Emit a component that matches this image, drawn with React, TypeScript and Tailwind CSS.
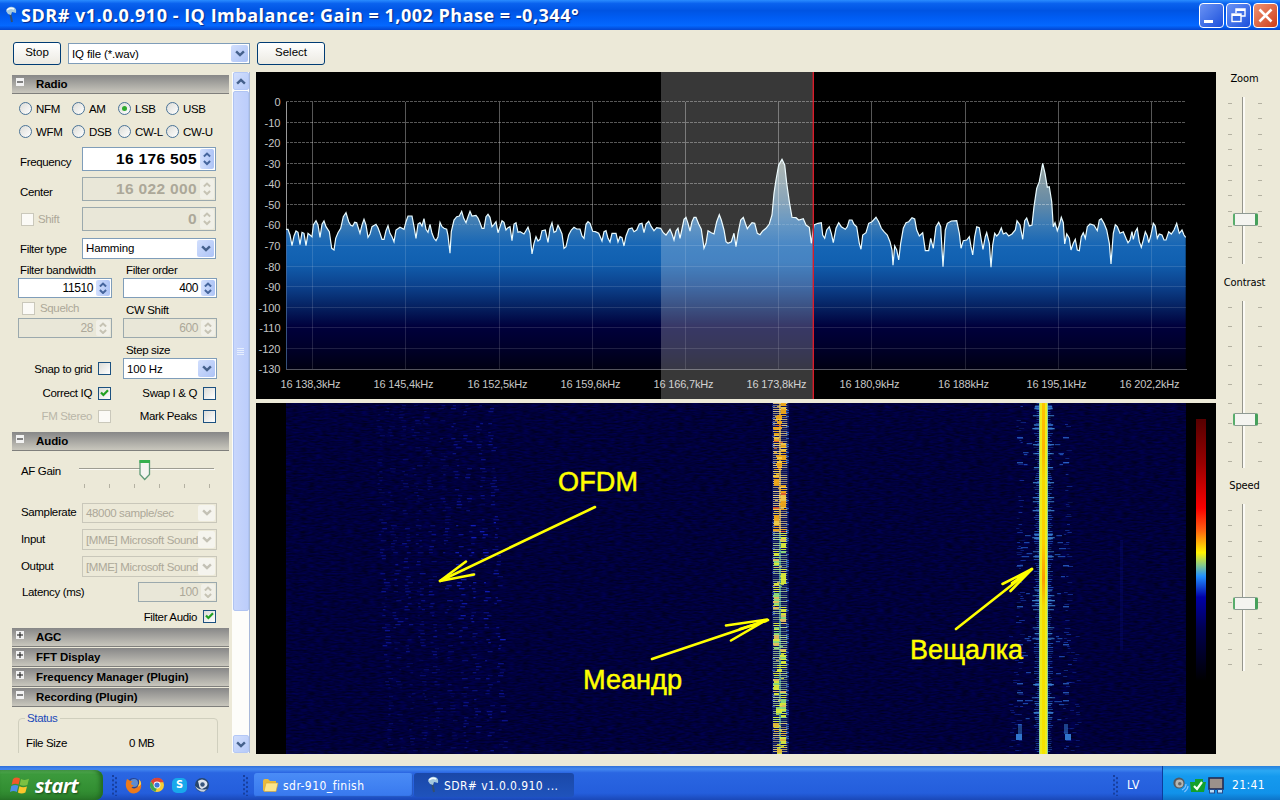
import React from "react";

/* ---------- helpers ---------- */

function makeRandom(seed: number) {
  let s = seed;
  return () => {
    s = (s * 1664525 + 1013904223) % 4294967296;
    return s / 4294967296;
  };
}

type BarProps = { x: number; y: number; w: number; h: number; fill: string; o: number };

const Bars = ({ items }: { items: BarProps[] }) => (
  <>
    {items.map((b, i) => (
      <rect key={i} x={b.x} y={b.y} width={b.w} height={b.h} fill={b.fill} opacity={b.o} />
    ))}
  </>
);

/* ---------- small XP controls ---------- */

const Chevron = ({ up, color, size = 9 }: { up?: boolean; color: string; size?: number }) => (
  <svg width={size} height={size * 0.7} viewBox="0 0 9 6" className="block">
    <path d={up ? "M1 5 L4.5 1.6 L8 5" : "M1 1 L4.5 4.4 L8 1"} fill="none" stroke={color} strokeWidth="2.2" />
  </svg>
);

const Spinner = ({ value, disabled, big, className }: { value: string; disabled?: boolean; big?: boolean; className: string }) => (
  <div className={`flex items-stretch border p-px ${disabled ? "border-[#9ba9ad] bg-[#e9e7d8]" : "border-[#7f9db9] bg-white"} ${className}`}>
    <div
      className={`flex flex-1 items-center justify-end pr-[3px] leading-none ${big ? "text-[15.5px] font-bold tracking-[0.35px]" : "pb-px text-[12px] tracking-[-0.4px]"} ${disabled ? "text-[#aca899]" : "text-black"}`}
    >
      {value}
    </div>
    <div
      className={`flex w-[14px] flex-col items-center justify-evenly rounded-[2px] ${disabled ? "bg-[#f1f0e8]" : "bg-linear-to-r from-[#d2dffd] to-[#aec4f6]"}`}
    >
      <Chevron up color={disabled ? "#c6c3b4" : "#45659d"} size={8} />
      <Chevron color={disabled ? "#c6c3b4" : "#45659d"} size={8} />
    </div>
  </div>
);

const Combo = ({ value, disabled, className }: { value: string; disabled?: boolean; className: string }) => (
  <div className={`flex items-stretch overflow-hidden border p-px ${disabled ? "border-[#c9c7ba] bg-[#ece9d8]" : "border-[#7f9db9] bg-white"} ${className}`}>
    <div className={`min-w-0 flex-1 self-center pl-[2px] text-[11.5px] leading-[16px] whitespace-nowrap ${disabled ? "tracking-[-0.35px] text-[#aca899]" : "tracking-[-0.15px] text-black"}`}>
      {value}
    </div>
    <div className={`flex w-[17px] items-center justify-center rounded-[2px] ${disabled ? "bg-[#f5f4ee]" : "bg-linear-to-br from-[#d2dffd] to-[#adc3f6]"}`}>
      <Chevron color={disabled ? "#c3c1b5" : "#45618c"} size={10} />
    </div>
  </div>
);

const Check = ({ on, disabled }: { on?: boolean; disabled?: boolean }) => (
  <div className={`flex h-[13px] w-[13px] shrink-0 items-center justify-center border ${disabled ? "border-[#cac8bb] bg-[#fbfaf6]" : "border-[#1c5180] bg-linear-to-br from-[#dcdcd7] to-white"}`}>
    {on && (
      <svg width="9" height="9" viewBox="0 0 9 9">
        <path d="M1 3.4 L3.4 6 L8 1.2" fill="none" stroke="#21a121" strokeWidth="2.2" />
      </svg>
    )}
  </div>
);

const Radio = ({ label, on, className }: { label: string; on?: boolean; className: string }) => (
  <div className={`flex items-center gap-[4px] ${className}`}>
    <div className="flex h-[13px] w-[13px] shrink-0 items-center justify-center rounded-full border border-[#4a7397] bg-linear-to-br from-[#dcdcd7] to-white">
      {on && <div className="h-[5px] w-[5px] rounded-full bg-[#2faa2f]" />}
    </div>
    <span className="whitespace-nowrap tracking-[-0.35px]">{label}</span>
  </div>
);

const Header = ({ label, open, className = "" }: { label: string; open?: boolean; className?: string }) => (
  <div className={`flex h-[20px] shrink-0 flex-col ${className}`}>
    <div className="flex h-[19px] items-start border-b border-[#7f7f7c] bg-linear-to-b from-[#878787] to-[#c9c7bd]">
      <div className="mt-[3px] ml-[4px] flex h-[8px] w-[8px] items-center justify-center bg-[#f2f2f2]">
        <svg width="6" height="6" viewBox="0 0 6 6">
          <path d={open ? "M0 3 H6" : "M0 3 H6 M3 0 V6"} stroke="#111" strokeWidth="1" />
        </svg>
      </div>
      <span className="ml-[12px] text-[11.5px] leading-[18px] font-bold tracking-[-0.08px] whitespace-nowrap text-black">{label}</span>
    </div>
  </div>
);

const Tray = ({ label, ticks, thumb, className }: { label: string; ticks: number; thumb: string; className: string }) => (
  <div className={`flex flex-col items-center ${className}`}>
    <div className="h-[16px] pr-px font-['DejaVu_Sans_Condensed','Liberation_Sans',sans-serif] text-[11px] leading-[16px] tracking-[-0.1px]">{label}</div>
    <div className="relative mt-[10px] flex h-[167px] w-[34px] justify-between">
      <div className="flex flex-col justify-between py-[6px]">
        {Array.from({ length: ticks }, (_, i) => (
          <div key={i} className="h-px w-[4px] bg-[#b4b1a2]" />
        ))}
      </div>
      <div className="ml-[-4px] h-full w-[3px] border-l border-[#95958c] bg-[#fbfaf5]" />
      <div className="flex flex-col justify-between py-[6px]">
        {Array.from({ length: ticks }, (_, i) => (
          <div key={i} className="h-px w-[4px] bg-[#b4b1a2]" />
        ))}
      </div>
      <div className={`absolute left-[5px] h-[13px] w-[25px] rounded-[2px] border-y border-r-[3px] border-l-2 border-y-[#8f9a94] border-r-[#46a05c] border-l-[#58ad6c] bg-[#f4f4f0] ${thumb}`} />
    </div>
  </div>
);

/* ---------- spectrum ---------- */

const traceA =
  "108,478 114,478 120,495 126,527 132,498 138,483 144,487 150,524 156,487 162,490 168,527 174,490 180,495 186,500 190,465 198,452 204,465 210,502 216,463 222,453 228,470 238,485 245,535 252,540 257,505 264,488 272,475 280,440 288,428 296,455 302,466 308,468 314,457 320,458 330,490 336,465 342,448 348,465 354,502 360,492 366,470 378,463 384,473 390,490 396,508 402,508 408,482 414,467 420,490 426,500 432,515 438,480 450,472 462,478 468,455 474,438 486,438 492,470 498,505 504,462 510,458 516,468 522,446 528,478 534,487 540,463 546,490 552,505 558,512 564,500 570,457 576,470 582,475 590,478 594,497 600,550 604,485 612,450 620,440 628,438 635,424 641,445 648,458 654,440 660,424 666,438 678,436 684,444 690,458 696,475 702,475 708,440 714,433 720,442 726,470 732,463 738,455 744,488 750,470 756,452 762,457 768,480 774,473 780,470 786,512 792,462 798,458 804,487 810,485 822,492 834,472 840,490 846,552 852,520 858,500 864,513 870,508 876,482 886,480 894,517 900,475 906,458 912,487 918,484 924,466 930,478 936,492 942,535 948,530 956,495 964,480 972,472 980,477 990,477 996,498 1002,505 1008,463 1014,455 1020,460 1028,484 1036,485 1046,490 1056,513 1062,485 1068,482 1074,505 1080,516 1086,490 1092,490 1098,490 1104,516 1110,500 1116,503 1122,528 1128,498 1136,477 1146,474 1152,485 1160,480 1168,462 1176,460 1182,488 1188,462 1196,454";
const traceB =
  "4,290 12,302 20,293 32,295 40,308 48,315 60,298 66,312 72,330 78,303 84,295 90,325 96,297 102,268 108,262 114,280 120,303 126,275 132,262 138,262 146,282 154,298 162,355 168,340 174,302 184,308 192,312 200,275 208,254 214,270 222,300 228,335 234,340 244,335 252,310 258,350 264,310 272,270 280,262 286,280 292,296 300,285 306,278 314,280 322,310 330,314 338,303 348,295 358,282 366,255 372,190 378,150 386,105 396,88 404,105 410,160 418,215 426,262 438,263 446,270 460,266 468,285 478,292 484,340 492,285 504,280 514,278 518,315 524,325 530,300 538,290 544,310 550,338 558,295 566,278 574,290 586,298 592,290 598,270 606,270 612,283 620,290 628,340 633,358 638,315 648,308 656,280 666,275 678,262 686,275 694,295 702,305 712,315 720,335 726,360 729,406 734,348 740,360 746,390 752,340 760,295 768,278 776,275 786,263 794,267 800,300 808,318 818,308 826,362 836,362 842,325 850,355 858,290 866,277 872,290 879,410 886,300 892,280 904,273 920,272 928,310 933,355 940,332 950,330 958,320 963,350 968,375 974,320 980,290 988,293 994,330 999,358 1006,320 1010,308 1018,340 1023,412 1028,345 1034,310 1040,318 1046,312 1054,294 1060,312 1068,308 1076,318 1086,312 1096,300 1101,272 1110,285 1118,328 1124,272 1130,264 1138,288 1146,285 1152,230 1160,175 1168,155";
const traceC =
  "128,100 135,130 142,172 148,170 155,215 160,290 165,278 172,302 178,285 184,262 190,278 194,342 200,312 208,325 213,360 220,340 226,328 232,360 238,362 244,320 250,308 256,325 262,290 270,282 282,286 292,302 298,270 304,266 312,280 320,300 328,340 333,402 340,310 346,284 352,290 360,310 370,305 378,325 384,338 390,330 396,305 400,328 406,305 412,295 418,335 424,352 430,330 436,305 442,318 446,338 452,318 460,280 466,288 472,325 478,312 486,315 492,330 498,330 506,305 514,312 522,300 530,280 538,310 546,300 552,315 557,322";

const place = (src: string, ox: number, oy: number) =>
  src.split(" ").map((p) => {
    const [x, y] = p.split(",").map(Number);
    return `${(ox + x / 3).toFixed(1)},${(oy + y / 3).toFixed(1)}`;
  });

const tracePoints = [...place(traceA, 250, 70), ...place(traceB, 650, 130), ...place(traceC, 1000, 130)].join(" ");

const freqs: [number, string, number][] = [
  [312, "16 138,3kHz", 60],
  [405, "16 145,4kHz", 60],
  [499, "16 152,5kHz", 60],
  [592, "16 159,6kHz", 60],
  [685, "16 166,7kHz", 60],
  [778, "16 173,8kHz", 60],
  [871, "16 180,9kHz", 60],
  [965, "16 188kHz", 51],
  [1058, "16 195,1kHz", 60],
  [1151, "16 202,2kHz", 60],
];

const Spectrum = () => (
  <svg width="960" height="327" viewBox="256 72 960 327" className="block bg-black" fontFamily="'Liberation Sans', Arial, sans-serif">
    <defs>
      <linearGradient id="spec" gradientUnits="userSpaceOnUse" x1="0" y1="102" x2="0" y2="369">
        <stop offset="0" stopColor="#e8dcc0" />
        <stop offset="0.22" stopColor="#9aa49d" />
        <stop offset="0.37" stopColor="#688ca6" />
        <stop offset="0.46" stopColor="#3a7ab4" />
        <stop offset="0.54" stopColor="#1565b5" />
        <stop offset="0.6" stopColor="#1160b0" />
        <stop offset="0.69" stopColor="#0c418c" />
        <stop offset="0.77" stopColor="#05205f" />
        <stop offset="0.84" stopColor="#00003c" />
        <stop offset="0.92" stopColor="#00002a" />
        <stop offset="1" stopColor="#000012" />
      </linearGradient>
    </defs>
    <polygon points={`286.5,369 ${tracePoints} 1185.7,369`} fill="url(#spec)" />
    {Array.from({ length: 14 }, (_, i) => {
      const y = Math.round(102 + i * 20.57) - 0.5;
      return (
        <g key={i}>
          {i < 13 && (
            <path d={`M286 ${y} H1186`} stroke="#fff" strokeOpacity={i > 7 ? 0.12 : i > 5 ? 0.14 : 0.34} strokeDasharray={i > 6 ? undefined : "3 1"} />
          )}
          <text x="280.5" y={y + 4.7} fontSize="11" fill="#c6c6c6" textAnchor="end">
            {i === 0 ? "0" : `-${i * 10}`}
          </text>
        </g>
      );
    })}
    {freqs.map(([x, t, w]) => (
      <g key={x}>
        <path d={`M${x + 0.5} 102 V225`} stroke="#fff" strokeOpacity="0.34" />
        <path d={`M${x + 0.5} 225 V369`} stroke="#fff" strokeOpacity="0.13" />
        <text x={x - 1.5} y="388" fontSize="11" fill="#c6c6c6" textAnchor="middle" textLength={w}>
          {t}
        </text>
      </g>
    ))}
    <path d="M286.5 102 V230" stroke="#999" />
    <path d="M286.5 230 V369" stroke="#4d72a8" strokeOpacity="0.7" />
    <path d="M286 369.5 H1187" stroke="#54545e" />
    <polyline points={tracePoints} fill="none" stroke="#e9fbff" strokeWidth="1.2" />
    <rect x="661" y="72" width="152" height="327" fill="#fff" opacity="0.22" />
    <rect x="812.6" y="72" width="1.4" height="327" fill="#d81c2a" />
  </svg>
);

/* ---------- waterfall ---------- */

function ofdmBars(): BarProps[] {
  const r = makeRandom(11);
  const out: BarProps[] = [];
  const cols = [377, 388, 400, 413, 425, 440, 453, 465, 478, 490];
  cols.forEach((c, ci) => {
    for (let y = 405; y < 752; y += 3) {
      if (r() < 0.55) {
        const strength = (ci > 5 ? 0.5 : 0.32) * (y > 520 && y < 660 ? 1.3 : 0.8);
        out.push({ x: c + (y - 403) * 0.035 + r() * 5 - 3, y, w: 2 + r() * 4, h: 1.3, fill: "#1220c0", o: strength * (0.5 + r()) });
      }
    }
  });
  return out;
}

function meanderBars(): BarProps[] {
  const r = makeRandom(5);
  const out: BarProps[] = [];
  const blocks = [
    [0, 13, 1], [13, 25, 2], [25, 41, 0], [40, 61, 1], [50, 67, 2], [66, 83, 0], [82, 108, 1], [105, 127, 0], [126, 149, 1],
    [148, 167, 0], [166, 182, 1], [181, 206, 0], [205, 221, 1], [221, 246, 0], [246, 265, 1], [263, 271, 2], [271, 291, 0], [288, 315, 1], [303, 312, 2], [314, 329, 0], [328, 345, 1], [343, 351, 2],
  ];
  const palette = (y: number) => {
    const k = r();
    if (y < 130) return k < 0.6 ? "#f0a818" : k < 0.9 ? "#f2cc4a" : "#e0602c";
    if (y < 320) return k < 0.6 ? "#dcec38" : k < 0.85 ? "#8ee07a" : "#e4c060";
    return k < 0.5 ? "#e4bc38" : "#d8ea40";
  };
  out.push({ x: 772, y: 403, w: 17, h: 351, fill: "#0a1a78", o: 0.55 });
  out.push({ x: 779, y: 403, w: 2, h: 130, fill: "#e6bc4c", o: 0.75 });
  out.push({ x: 779, y: 533, w: 2, h: 221, fill: "#48a6a0", o: 0.8 });
  for (let y = 0; y < 350; y += 2) {
    const pale = y < 130 ? "#ecd080" : y < 320 ? "#b4d890" : "#dccc78";
    out.push({ x: 773, y: 403 + y, w: 7, h: 1, fill: pale, o: r() < 0.2 ? 0.25 : 0.5 + r() * 0.5 });
    out.push({ x: 780, y: 403 + y, w: 7.3, h: 1, fill: pale, o: r() < 0.2 ? 0.25 : 0.5 + r() * 0.5 });
    if (r() < 0.3) out.push({ x: 774 + Math.floor(r() * 8), y: 404 + y, w: 3, h: 1, fill: palette(y), o: 0.8 });
    if (r() < 0.25) out.push({ x: 772, y: 404 + y, w: 3, h: 1, fill: "#3158c8", o: 0.7 });
    if (r() < 0.3) out.push({ x: 786, y: 404 + y, w: 3, h: 1, fill: "#3c7ae0", o: 0.7 });
  }
  blocks.forEach(([a, b, side]) => {
    for (let y = a - (a % 2); y < b; y += 2) {
      const core = Math.abs(y - (a + b) / 2) < (b - a) / 4.5;
      const full = core ? r() < 0.85 : r() < 0.25;
      const x = side === 0 ? 774 : side === 1 ? 781 : 777;
      const nudge = r() < 0.3 ? 1 : 0;
      out.push({ x: x - nudge, y: 403 + y, w: 5 + nudge, h: full ? 2 : 1, fill: palette(y), o: 0.95 });
    }
  });
  return out;
}

function carrierBars(): BarProps[] {
  const r = makeRandom(23);
  const out: BarProps[] = [];
  for (let y = 403; y < 753; y += 2) {
    const l = 1.5 + r() * 4;
    out.push({ x: 1039 - l, y, w: 9 + 2 * l, h: 1, fill: "#2b6ee0", o: 0.25 + r() * 0.45 });
  }
  const strong = [406, 408, 415, 424, 428, 444, 453, 467, 482, 497, 501, 510, 534, 537, 538, 551, 556, 590, 595, 600, 603, 605, 609, 627, 633, 638, 684, 697, 703, 712, 717];
  strong.forEach((y) => {
    const l = 4 + r() * 3.5;
    const o = 0.45 + r() * 0.35;
    out.push({ x: 1039 - l, y, w: l, h: 1.3, fill: "#4aa4f4", o });
    out.push({ x: 1048, y, w: l, h: 1.3, fill: "#4aa4f4", o });
  });
  const wide = [443, 452, 454, 464, 535, 542, 547, 553, 556, 576, 593, 636, 638, 640, 655, 672, 700, 703, 718];
  wide.forEach((y) => {
    const d = 10 + r() * 7;
    const w = 3 + r() * 5;
    out.push({ x: 1043 - d - w, y, w, h: 1.2, fill: "#2868e0", o: 0.65 });
    out.push({ x: 1044 + d, y: y + (r() < 0.5 ? 0 : 1), w, h: 1.2, fill: "#2868e0", o: 0.65 });
  });
  for (let y = 404; y < 752; y += 2) {
    const dense = y > 500 ? 0.4 : 0.2;
    if (r() < dense) out.push({ x: 1016 + r() * 5, y, w: 2 + r() * 4, h: 1, fill: "#1f4fd4", o: 0.2 + r() * 0.4 });
    if (r() < dense) out.push({ x: 1063 + r() * 5, y, w: 2 + r() * 4, h: 1, fill: "#1f4fd4", o: 0.2 + r() * 0.4 });
    if (y > 630 && r() < 0.35) {
      out.push({ x: 1008 + r() * 8, y, w: 4, h: 1, fill: "#1434b4", o: 0.45 });
      out.push({ x: 1070 + r() * 8, y, w: 4, h: 1, fill: "#1434b4", o: 0.45 });
    }
  }
  [437, 462, 565, 606, 644, 683, 692, 700].forEach((y) => {
    out.push({ x: 1017, y, w: 6, h: 1.4, fill: "#3580ec", o: 0.65 });
    out.push({ x: 1063, y, w: 6, h: 1.4, fill: "#3580ec", o: 0.65 });
  });
  for (let y = 724; y < 740; y += 2) {
    const lower = y > 732;
    out.push({ x: lower ? 1016 : 1018, y, w: lower ? 6 : 4, h: 2, fill: "#3d92f0", o: lower ? 0.8 : 0.45 });
    out.push({ x: lower ? 1065 : 1064, y, w: lower ? 6 : 4, h: 2, fill: "#3d92f0", o: lower ? 0.8 : 0.45 });
  }
  return out;
}

const Waterfall = () => (
  <svg width="960" height="351" viewBox="256 403 960 351" className="block bg-black" fontFamily="'Liberation Sans', Arial, sans-serif">
    <defs>
      <filter id="noise" x="0" y="0" width="100%" height="100%" colorInterpolationFilters="sRGB">
        <feTurbulence type="fractalNoise" baseFrequency="0.13 0.6" numOctaves="2" seed="4" />
        <feColorMatrix values="0 0 0 0 0  0 0 0 0 0  0.3 0 0 0 0.08  0 0 0 0 1" />
      </filter>
      <linearGradient id="scale" x1="0" y1="0" x2="0" y2="1">
        <stop offset="0" stopColor="#560000" />
        <stop offset="0.17" stopColor="#980000" />
        <stop offset="0.34" stopColor="#f80000" />
        <stop offset="0.42" stopColor="#ff5a10" />
        <stop offset="0.51" stopColor="#fff400" />
        <stop offset="0.56" stopColor="#80c890" />
        <stop offset="0.6" stopColor="#2290ff" />
        <stop offset="0.68" stopColor="#0000a8" />
        <stop offset="0.8" stopColor="#000050" />
        <stop offset="1" stopColor="#000000" />
      </linearGradient>
      <linearGradient id="core" gradientUnits="userSpaceOnUse" x1="0" y1="403" x2="0" y2="754">
        <stop offset="0" stopColor="#ffc400" />
        <stop offset="0.13" stopColor="#ffb400" />
        <stop offset="0.22" stopColor="#f8d800" />
        <stop offset="0.4" stopColor="#ffd000" />
        <stop offset="0.5" stopColor="#ff9c00" />
        <stop offset="0.58" stopColor="#f6dc00" />
        <stop offset="1" stopColor="#f6e400" />
      </linearGradient>
    </defs>
    <rect x="286" y="403" width="900" height="351" fill="#00003a" />
    <rect x="286" y="403" width="900" height="351" filter="url(#noise)" />
    <rect x="1120" y="540" width="3" height="110" fill="#0a14a0" opacity="0.2" />
    <Bars items={ofdmBars()} />
    <Bars items={meanderBars()} />
    <Bars items={carrierBars()} />
    <rect x="1039" y="403" width="9" height="351" fill="#8fd29a" />
    <rect x="1040" y="403" width="7" height="351" fill="#eeec1c" />
    <rect x="1042" y="403" width="3" height="351" fill="url(#core)" />
    <rect x="1196" y="419" width="10" height="262" fill="url(#scale)" />
    <g fill="none" stroke="#ffff00" strokeWidth="2.6" strokeLinecap="round" strokeLinejoin="round">
      <path d="M595 507 L440 581" />
      <path d="M466 561.5 L440 581 L474 574.5" />
      <path d="M652 659 L768 620" />
      <path d="M726 625.5 L767 619.5 L731 640.5 M740 629 L766 621" />
      <path d="M956 629 L1032 569" />
      <path d="M1002.5 584 L1032 569 L1010.5 591 M1012 583 L1030 571" />
    </g>
    <g fill="#ffff00" fontSize="27" stroke="#ffff00" strokeWidth="0.5">
      <text x="558" y="491" textLength="80">OFDM</text>
      <text x="583" y="688.5" textLength="99" lengthAdjust="spacingAndGlyphs">Меандр</text>
      <text x="910" y="659" textLength="113" lengthAdjust="spacingAndGlyphs">Вещалка</text>
    </g>
  </svg>
);

/* ---------- icons ---------- */

const MicIcon = () => (
  <svg width="16" height="18" viewBox="0 0 16 18">
    <path d="M7 6 L9 16" stroke="#35506e" strokeWidth="2" />
    <path d="M3 5 Q5 0 10 1 Q14 2 13 7 L9 6 L8 9 L5 8 Z" fill="#a5c8de" />
    <path d="M4 4 Q7 1 11 3" stroke="#f4fbff" strokeWidth="1.6" fill="none" />
  </svg>
);

const WindowsFlag = () => (
  <svg width="20" height="19" viewBox="0 0 20 19">
    <path d="M3 3 Q6 0.5 10 2.5 L8.6 8.4 Q5 6.8 1.6 8.8 Z" fill="#f0592a" />
    <path d="M11 3 Q15 5 19 2.8 L17.4 9 Q13.5 10.6 9.7 8.8 Z" fill="#7cc142" />
    <path d="M1.3 10 Q5 8 8.3 9.8 L6.8 16 Q3.4 14.2 0 16 Z" fill="#4c8fe8" />
    <path d="M9.4 10.2 Q13 12 17 10.4 L15.4 16.4 Q11.5 18.4 7.9 16.4 Z" fill="#fbc62c" />
  </svg>
);

const FirefoxIcon = () => (
  <svg width="17" height="17" viewBox="0 0 17 17">
    <circle cx="8.5" cy="8" r="7" fill="#28428e" />
    <circle cx="9" cy="6" r="4" fill="#5d8cd0" />
    <path d="M2 2 Q0 7 1.4 11 Q4 16.5 9 16.5 Q15.5 16 16.3 9 Q16.5 5 14 2.6 Q15 7 12.5 10 Q9.5 12.6 6.5 10.4 L9 8.5 Q6 8 6 6 L7.5 4.6 Q4.6 3.8 2 2 Z" fill="#ec7a1c" />
    <path d="M14 2.6 Q15 7 12.5 10 Q15 9 16.2 7 Q16 4 14 2.6 Z" fill="#ffd04a" />
  </svg>
);

const ChromeIcon = () => (
  <svg width="16" height="16" viewBox="0 0 16 16">
    <circle cx="8" cy="8" r="7" fill="#f5ce35" />
    <path d="M1.9 4.5 A7 7 0 0 1 14.6 5.2 L8 5.2 L5.2 9.2 Z" fill="#dc4437" />
    <path d="M1.9 4.5 L5.5 9.8 L8 11 L6.4 14.8 A7 7 0 0 1 1.9 4.5 Z" fill="#3fa652" />
    <circle cx="8" cy="8" r="3.4" fill="#fff" />
    <circle cx="8" cy="8" r="2.6" fill="#3b78d8" />
  </svg>
);

const BirdIcon = () => (
  <svg width="16" height="16" viewBox="0 0 16 16">
    <circle cx="8" cy="8" r="7" fill="#26456e" />
    <path d="M4 4 Q8 1 12 4 Q15 7 12 10 L8 12 Q5 11 5 8 Z" fill="#dfe6ee" />
    <circle cx="8.5" cy="7.5" r="2.2" fill="#38577e" />
    <path d="M1 9 Q6 14 13 12 L10 14.8 Q4 15 1 9 Z" fill="#c8d3df" />
  </svg>
);

const FolderIcon = () => (
  <svg width="17" height="15" viewBox="0 0 17 15">
    <path d="M1 3 Q1 1 3 1 H6 L8 3 H14 V13 H2 Q1 13 1 12 Z" fill="#e9b93c" />
    <path d="M4 5 H16 L14 13.5 H2 Z" fill="#fbe58c" stroke="#d9a52b" strokeWidth="0.6" />
  </svg>
);

const SpeakerIcon = () => (
  <svg width="17" height="18" viewBox="0 0 17 18">
    <circle cx="7" cy="7" r="5.6" fill="#55595e" />
    <circle cx="7.4" cy="7.4" r="4" fill="#b6b6b2" />
    <circle cx="7.8" cy="7.8" r="1.8" fill="#64676a" />
    <path d="M10 14 Q14 12 14 8 M12.4 16 Q16 13 16 10" stroke="#84c4ff" strokeWidth="1.2" fill="none" />
  </svg>
);

const SafeIcon = () => (
  <svg width="16" height="16" viewBox="0 0 16 16">
    <path d="M0 5 H5 V2 H13 V5 H16 L14 15 H1 Z" fill="#12a02c" />
    <path d="M4 9 L7 12 L12 5" stroke="#f2fff2" strokeWidth="2.2" fill="none" />
  </svg>
);

const DriveIcon = () => (
  <svg width="16" height="17" viewBox="0 0 16 17">
    <rect x="1" y="1" width="14" height="11" fill="#9b918b" stroke="#232b50" strokeWidth="1.6" />
    <rect x="1.5" y="12.5" width="5" height="3.5" fill="#b9dcf6" stroke="#264888" />
    <rect x="9.5" y="12.5" width="5" height="3.5" fill="#b9dcf6" stroke="#264888" />
  </svg>
);

const Grip = () => (
  <svg width="6" height="22" viewBox="0 0 6 22">
    {[0, 1, 2, 3, 4].map((i) => (
      <g key={i} fill="#173f9e">
        <rect x="0" y={1 + i * 4.4} width="2" height="2" />
        <rect x="3" y={3.2 + i * 4.4} width="2" height="2" />
      </g>
    ))}
  </svg>
);

/* ---------- side panel ---------- */

const Sidebar = () => (
  <div className="flex h-[681px] w-[217px] shrink-0 flex-col overflow-hidden text-[11.5px] leading-[14px] tracking-[-0.35px]">
    <Header label="Radio" open className="mt-[3px]" />
    <div className="flex h-[27px] shrink-0 items-center pl-[7px]">
      <Radio label="NFM" className="w-[53px]" />
      <Radio label="AM" className="w-[46px]" />
      <Radio label="LSB" on className="w-[48px]" />
      <Radio label="USB" className="w-[50px]" />
    </div>
    <div className="flex h-[19px] shrink-0 items-center pl-[7px]">
      <Radio label="WFM" className="w-[53px]" />
      <Radio label="DSB" className="w-[46px]" />
      <Radio label="CW-L" className="w-[48px]" />
      <Radio label="CW-U" className="w-[50px]" />
    </div>
    <div className="mt-[3px] flex h-[30px] shrink-0 items-center pl-[8px]">
      <span className="w-[62px] pt-[5px]">Frequency</span>
      <Spinner value="16 176 505" big className="h-[24px] w-[134px]" />
    </div>
    <div className="flex h-[30px] shrink-0 items-center pl-[8px]">
      <span className="w-[62px] pt-[6px]">Center</span>
      <Spinner value="16 022 000" big disabled className="h-[24px] w-[134px]" />
    </div>
    <div className="flex h-[30px] shrink-0 items-center pl-[9px] text-[#aca899]">
      <Check disabled />
      <span className="w-[48px] pl-[4px]">Shift</span>
      <Spinner value="0" big disabled className="h-[24px] w-[134px]" />
    </div>
    <div className="flex h-[28px] shrink-0 items-center pl-[8px]">
      <span className="w-[62px] pt-[2px]">Filter type</span>
      <Combo value="Hamming" className="h-[21px] w-[134px]" />
    </div>
    <div className="flex h-[15px] shrink-0 items-center pl-[8px]">
      <span className="w-[106px]">Filter bandwidth</span>
      <span>Filter order</span>
    </div>
    <div className="flex h-[21px] shrink-0 items-end gap-[11px] pl-[6px]">
      <Spinner value="11510" className="h-[20px] w-[94px]" />
      <Spinner value="400" className="h-[20px] w-[94px]" />
    </div>
    <div className="flex h-[20px] shrink-0 items-center pl-[10px]">
      <Check disabled />
      <span className="w-[91px] pl-[5px] text-[#aca899]">Squelch</span>
      <span className="pt-[4px]">CW Shift</span>
    </div>
    <div className="flex h-[20px] shrink-0 items-end gap-[11px] pl-[6px]">
      <Spinner value="28" disabled className="h-[20px] w-[94px]" />
      <Spinner value="600" disabled className="h-[20px] w-[94px]" />
    </div>
    <div className="flex h-[20px] shrink-0 items-end pb-px pl-[114px]">Step size</div>
    <div className="flex h-[21px] shrink-0 items-center pl-[6px]">
      <div className="flex w-[93px] items-center justify-end gap-[6px]">
        Snap to grid
        <Check />
      </div>
      <Combo value="100 Hz" className="ml-[12px] h-[21px] w-[94px]" />
    </div>
    <div className="mt-px flex h-[26px] shrink-0 items-center pl-[6px]">
      <div className="flex w-[93px] items-center justify-end gap-[6px]">
        Correct IQ
        <Check on />
      </div>
      <div className="flex w-[105px] items-center justify-end gap-[6px]">
        Swap I &amp; Q
        <Check />
      </div>
    </div>
    <div className="flex h-[20px] shrink-0 items-center pl-[6px]">
      <div className="flex w-[93px] items-center justify-end gap-[6px] text-[#b9b6a8]">
        FM Stereo
        <Check disabled />
      </div>
      <div className="flex w-[105px] items-center justify-end gap-[6px]">
        Mark Peaks
        <Check />
      </div>
    </div>
    <Header label="Audio" open className="mt-[6px]" />
    <div className="flex h-[46px] shrink-0 items-start pl-[9px]">
      <span className="w-[58px] pt-[12px]">AF Gain</span>
      <svg width="140" height="40" viewBox="79 452 140 40">
        <path d="M79 468.5 H214" stroke="#9d9c92" />
        <path d="M79 469.5 H215" stroke="#fbfaf5" />
        {[84, 109, 134, 159, 184, 209].map((x) => (
          <path key={x} d={`M${x + 0.5} 484 V488`} stroke="#b4b1a2" />
        ))}
        <path d="M140 461 H149.5 V474.5 L144.7 479.5 L140 474.5 Z" fill="#f4f4f0" stroke="#5f9a77" strokeWidth="1.3" />
        <path d="M139.5 461.5 H150" stroke="#35b04e" strokeWidth="3" />
      </svg>
    </div>
    <div className="flex h-[27px] shrink-0 items-center pt-[2px] pl-[9px]">
      <span className="w-[61px] pb-[2px]">Samplerate</span>
      <Combo value="48000 sample/sec" disabled className="h-[20px] w-[135px]" />
    </div>
    <div className="flex h-[27px] shrink-0 items-center pt-[2px] pl-[9px]">
      <span className="w-[61px] pb-[2px]">Input</span>
      <Combo value="[MME] Microsoft Sound" disabled className="h-[21px] w-[135px]" />
    </div>
    <div className="flex h-[27px] shrink-0 items-center pt-[2px] pl-[9px]">
      <span className="w-[61px] pb-[2px]">Output</span>
      <Combo value="[MME] Microsoft Sound" disabled className="h-[21px] w-[135px]" />
    </div>
    <div className="flex h-[26px] shrink-0 items-center pl-[10px]">
      <span className="w-[116px]">Latency (ms)</span>
      <Spinner value="100" disabled className="h-[20px] w-[79px]" />
    </div>
    <div className="flex h-[23px] shrink-0 items-center justify-end gap-[6px] pr-[13px]">
      Filter Audio
      <Check on />
    </div>
    <Header label="AGC" />
    <Header label="FFT Display" />
    <Header label="Frequency Manager (Plugin)" />
    <Header label="Recording (Plugin)" open />
    <fieldset className="mr-[11px] ml-[6px] mt-[3px] h-[60px] shrink-0 rounded-[4px] border border-[#d0cfbe] pl-[7px]">
      <legend className="ml-[-1px] px-[2px] leading-[14px] text-[#1a48b8]">Status</legend>
      <div className="flex pt-[11px]">
        <span className="w-[103px]">File Size</span>
        <span>0 MB</span>
      </div>
    </fieldset>
  </div>
);

const ScrollButton = ({ up }: { up?: boolean }) => (
  <div className="flex h-[18px] w-[16px] shrink-0 items-center justify-center rounded-[2px] border border-[#b4c8f6] bg-linear-to-br from-[#d2dffd] to-[#b6caf8]">
    <Chevron up={up} color="#45618c" size={10} />
  </div>
);

/* ---------- window ---------- */

export default function App() {
  return (
    <div className="flex h-[800px] w-[1280px] flex-col overflow-hidden bg-[#ece9d8] font-['Liberation_Sans',Arial,sans-serif] text-black">
      <div className="flex h-[30px] shrink-0 items-center bg-[linear-gradient(to_bottom,#2a8cff_0%,#0a62ee_12%,#0054e3_35%,#005df4_60%,#0468ff_85%,#0345cf_100%)] pr-[2px] pl-[3px]">
        <MicIcon />
        <div className="ml-[2px] flex-1 font-['Open_Sans','Noto_Sans',sans-serif] text-[18px] leading-[30px] font-bold tracking-[0.51px] whitespace-nowrap text-white [text-shadow:1px_1px_1px_#0a2a86]">
          SDR# v1.0.0.910 - IQ Imbalance: Gain = 1,002 Phase = -0,344°
        </div>
        <div className="flex gap-[2px]">
          <div className="flex h-[25px] w-[25px] items-end rounded-[4px] border border-white bg-linear-to-br from-[#6a92f4] to-[#1c4fdc] pb-[4px] pl-[4px]">
            <div className="h-[3px] w-[9px] bg-white" />
          </div>
          <div className="flex h-[25px] w-[25px] items-center justify-center rounded-[4px] border border-white bg-linear-to-br from-[#6a92f4] to-[#1c4fdc]">
            <svg width="15" height="15" viewBox="0 0 15 15">
              <path d="M5 5 V1 H14 V8 H10" fill="none" stroke="#fff" strokeWidth="1.4" />
              <path d="M5 2 H14" stroke="#fff" strokeWidth="2" />
              <rect x="1" y="6" width="9" height="7.5" fill="#3467e4" stroke="#fff" strokeWidth="1.4" />
              <path d="M1 7 H10" stroke="#fff" strokeWidth="2" />
            </svg>
          </div>
          <div className="flex h-[25px] w-[25px] items-center justify-center rounded-[4px] border border-white bg-linear-to-br from-[#ee9272] to-[#cc3a12]">
            <svg width="15" height="15" viewBox="0 0 15 15">
              <path d="M1.5 1.5 L13.5 13.5 M13.5 1.5 L1.5 13.5" stroke="#fff" strokeWidth="2.6" />
            </svg>
          </div>
        </div>
      </div>

      <div className="flex h-[42px] shrink-0 items-start pt-[12px] pl-[13px] text-[11.5px]">
        <div className="flex h-[23px] w-[48px] items-center justify-center rounded-[3px] border border-[#003c74] bg-linear-to-b from-white to-[#eceae2] pb-px">Stop</div>
        <Combo value="IQ file (*.wav)" className="mt-px ml-[7px] h-[21px] w-[182px]" />
        <div className="ml-[7px] flex h-[23px] w-[68px] items-center justify-center rounded-[3px] border border-[#003c74] bg-linear-to-b from-white to-[#eceae2] pb-px">Select</div>
      </div>

      <div className="flex h-[694px] shrink-0 items-start pl-[12px]">
        <Sidebar />
        <div className="ml-[3px] flex h-[681px] w-[18px] shrink-0 flex-col items-center border-r border-[#a9b9d9] bg-[#fdfdfa] text-[12px]">
          <ScrollButton up />
          <div className="mt-px flex h-[520px] w-[16px] flex-col items-center justify-center gap-px rounded-[2px] border border-[#b0c4f2] bg-linear-to-r from-[#c8d6fb] to-[#bccdfb]">
            {[0, 1, 2, 3].map((i) => (
              <div key={i} className="h-px w-[7px] bg-[#e6eefe]" />
            ))}
          </div>
          <div className="flex-1" />
          <ScrollButton />
        </div>
        <div className="ml-[6px] flex w-[960px] shrink-0 flex-col gap-[4px]">
          <Spectrum />
          <Waterfall />
        </div>
        <div className="flex w-[58px] shrink-0 flex-col">
          <Tray label="Zoom" ticks={11} thumb="top-[116px]" className="mt-[-1px]" />
          <Tray label="Contrast" ticks={9} thumb="top-[112px]" className="mt-[11px]" />
          <Tray label="Speed" ticks={11} thumb="top-[93px]" className="mt-[10px]" />
        </div>
      </div>

      <div className="flex h-[34px] shrink-0 items-stretch bg-[linear-gradient(to_bottom,#2f6fd8_0%,#4488f0_9%,#2a66e2_20%,#245edc_80%,#1a48b8_100%)] font-['DejaVu_Sans_Condensed','Liberation_Sans',sans-serif] text-[12px] text-white">
        <div className="mt-[4px] flex w-[103px] items-center rounded-r-[8px] bg-[linear-gradient(to_bottom,#5cb45c_0%,#3c9a3c_15%,#328e32_70%,#2a7a2a_100%)] pl-[10px] shadow-[inset_-3px_0_4px_#226a22]">
          <WindowsFlag />
          <span className="ml-[5px] pt-[2px] font-['Open_Sans','Liberation_Sans',sans-serif] text-[20px] leading-none font-bold tracking-[-0.6px] italic [text-shadow:1px_1px_2px_#174a17]">start</span>
        </div>
        <div className="flex items-center gap-[7px] pt-[4px] pl-[9px]">
          <Grip />
          <div className="flex items-center gap-[7px]">
            <FirefoxIcon />
            <ChromeIcon />
            <div className="flex h-[15px] w-[15px] items-center justify-center rounded-[5px] bg-[#18a8ec] text-[11px] font-bold">S</div>
            <BirdIcon />
          </div>
        </div>
        <div className="flex items-center pt-[4px] pl-[33px]">
          <Grip />
        </div>
        <div className="mt-[7px] mb-[3px] ml-[5px] flex w-[159px] items-center rounded-[3px] bg-linear-to-b from-[#4a8cf6] to-[#3878ee] pl-[8px] shadow-[inset_-1px_-1px_1px_#2456c0]">
          <FolderIcon />
          <span className="ml-[4px] pt-px tracking-[0.45px]">sdr-910_finish</span>
        </div>
        <div className="mt-[7px] mb-[3px] ml-px flex w-[160px] items-center rounded-[3px] bg-linear-to-b from-[#1a48a8] to-[#1f53bc] pl-[11px]">
          <MicIcon />
          <span className="ml-[3px] pt-[2px] tracking-[0.4px]">SDR# v1.0.0.910 ...</span>
        </div>
        <div className="flex-1" />
        <div className="flex items-center pt-[4px]">
          <Grip />
        </div>
        <div className="flex w-[43px] items-center pt-[4px] pl-[8px] tracking-[0.4px]">LV</div>
        <div className="flex w-[118px] items-center border-l border-[#0d3c9c] bg-[linear-gradient(to_bottom,#2a80dc_0%,#2aa8f4_14%,#159aee_30%,#1192ea_80%,#0d74c8_100%)] pt-[4px] pl-[9px]">
          <SpeakerIcon />
          <span className="ml-[1px] flex"><SafeIcon /></span>
          <span className="ml-[2px] flex"><DriveIcon /></span>
          <span className="ml-[8px] tracking-[0.4px]">21:41</span>
        </div>
      </div>
    </div>
  );
}
